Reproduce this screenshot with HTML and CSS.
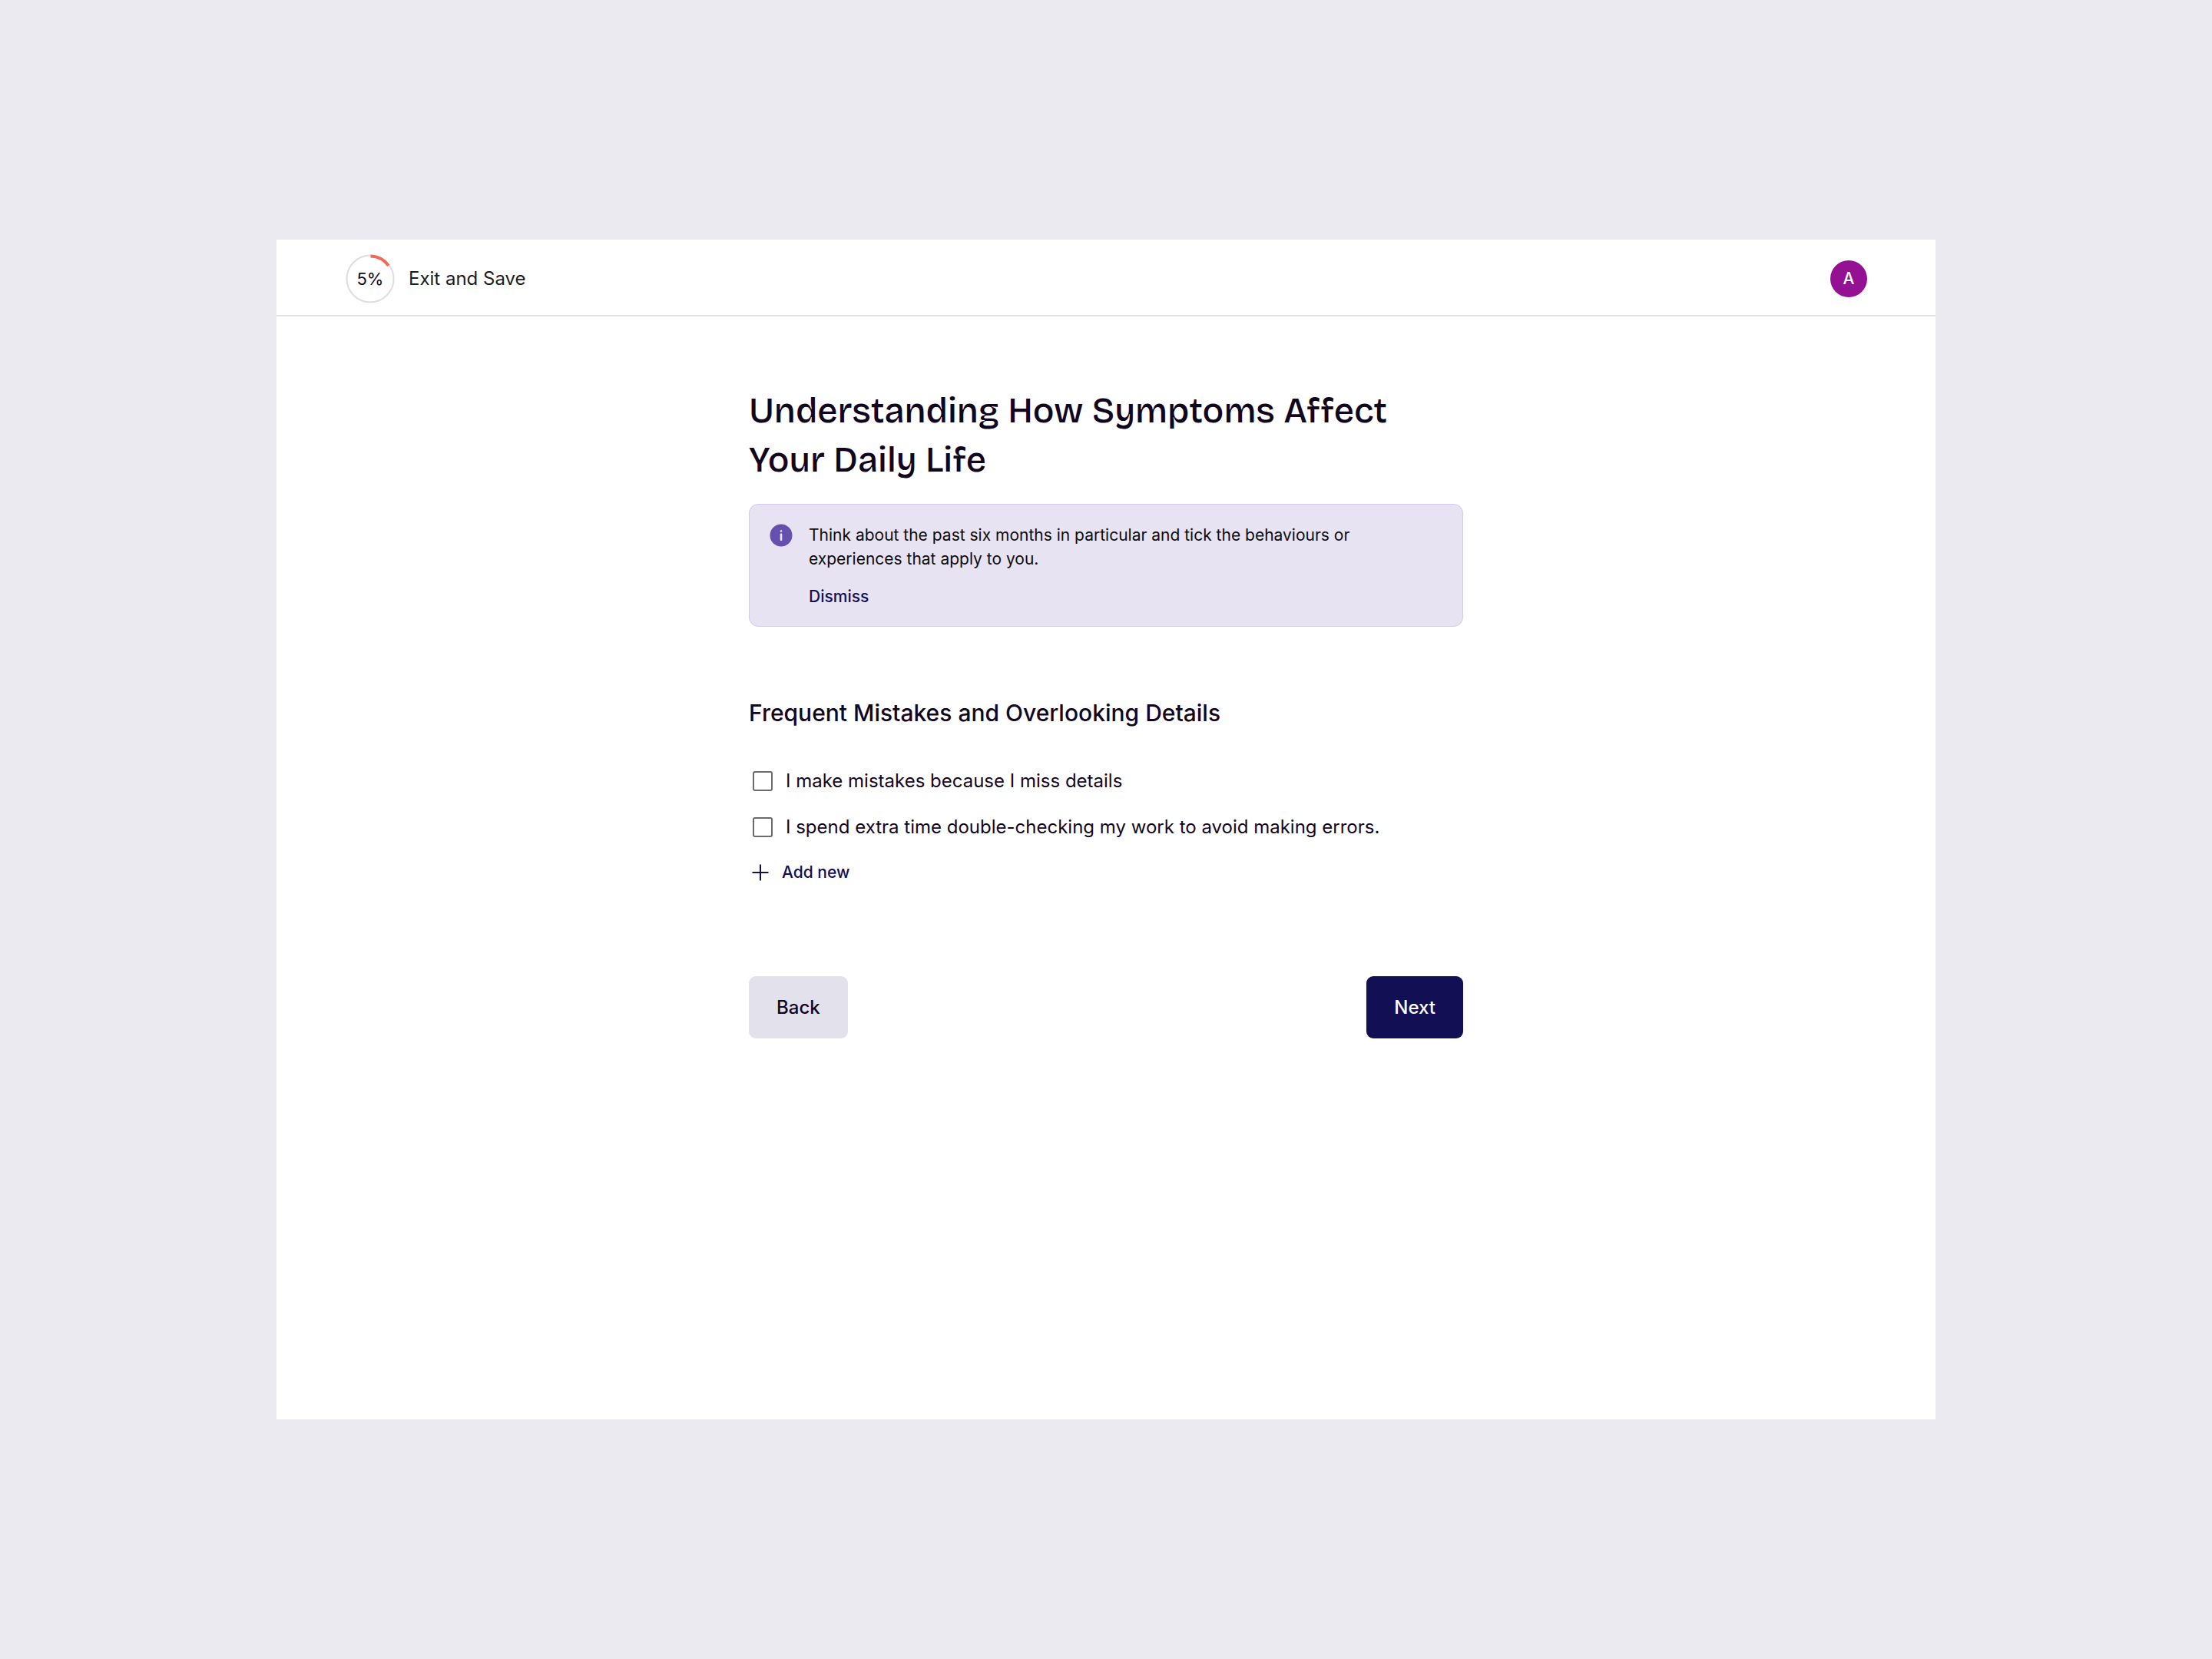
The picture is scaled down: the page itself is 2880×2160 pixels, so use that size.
FILE: index.html
```html
<!DOCTYPE html>
<html lang="en">
<head>
  <meta charset="utf-8">
  <meta name="viewport" content="width=device-width, initial-scale=1">
  <title>Understanding How Symptoms Affect Your Daily Life</title>
  <link rel="stylesheet" href="styles.css">
</head>
<body class="page">
  <div class="panel">
    <header class="header">
      <a class="exit" href="#exit">
        <span class="progress">
          <svg class="progress-ring" viewBox="0 0 64 64" aria-hidden="true">
            <circle cx="32" cy="32" r="30.5" fill="none" stroke="#dedede" stroke-width="2"/>
            <path d="M32.500 2.500 A29.500 29.500 0 0 1 55.800 14.800" fill="none" stroke="#ee6a55" stroke-width="4"/>
          </svg>
          <span class="progress-value">5%</span>
        </span>
        <span>Exit and Save</span>
      </a>
      <button class="avatar" type="button" aria-label="Account">A</button>
    </header>

    <main class="content">
      <h1 class="title">Understanding How Symptoms Affect Your Daily Life</h1>

      <section class="notice">
        <svg class="notice-icon" viewBox="0 0 30 30" aria-hidden="true">
          <circle cx="15" cy="15" r="14.500" fill="#6550ad"/>
          <rect x="13.700" y="8.300" width="2.600" height="2.400" rx="1" fill="#e8e3f3"/>
          <rect x="13.700" y="12.500" width="2.600" height="9.500" rx="1" fill="#e8e3f3"/>
        </svg>
        <div class="notice-body">
          <p class="notice-text">Think about the past six months in particular and tick the behaviours or experiences that apply to you.</p>
          <button class="text-button" type="button">Dismiss</button>
        </div>
      </section>

      <form class="form">
        <fieldset class="question">
          <legend class="question-title">Frequent Mistakes and Overlooking Details</legend>
          <div class="options">
            <label class="option"><input class="checkbox" type="checkbox" name="details">I make mistakes because I miss details</label>
            <label class="option"><input class="checkbox" type="checkbox" name="checking">I spend extra time double-checking my work to avoid making errors.</label>
          </div>
          <button class="text-button add" type="button">
            <svg class="add-icon" viewBox="0 0 22 22" aria-hidden="true">
              <path d="M11 .5v21M.5 11h21" fill="none" stroke="#130f54" stroke-width="2"/>
            </svg>
            Add new
          </button>
        </fieldset>
        <div class="actions">
          <button class="button button-secondary" type="button">Back</button>
          <button class="button button-primary" type="submit">Next</button>
        </div>
      </form>
    </main>
  </div>
</body>
</html>
```
FILE: styles.css
```css
* {
  box-sizing: border-box;
}

.page {
  display: flex;
  min-height: 100vh;
  margin: 0;
  padding: 312px 12.5%;
  background: #ebeaf0;
  color: #12061f;
  font-family: Inter, "Liberation Sans", sans-serif;
  font-size: 24px;
  line-height: 36px;
}

button {
  padding: 0;
  border: 0;
  background: none;
  color: inherit;
  font: inherit;
  cursor: pointer;
}

.panel {
  flex: 1;
  background: #fff;
}

.header {
  display: flex;
  align-items: center;
  justify-content: space-between;
  padding: 19px 89px 15px 90px;
  border-bottom: 2px solid #e0e0e2;
}

.exit {
  display: flex;
  align-items: center;
  gap: 18px;
  color: #1d1b20;
  text-decoration: none;
}

.progress {
  display: grid;
  place-items: center;
}

.progress-ring,
.progress-value {
  grid-area: 1 / 1;
}

.progress-ring {
  width: 64px;
  height: 64px;
}

.progress-value {
  color: #12061f;
  font-size: 22px;
}

.avatar {
  width: 48px;
  height: 48px;
  border-radius: 50%;
  background: #951193;
  color: #fff;
  font-size: 21px;
  font-weight: 500;
}

.content {
  max-width: 930px;
  margin: 0 auto;
  padding: 91px 0;
}

.title {
  margin: 0 0 25px;
  font-family: "Bricolage Grotesque", Inter, "Liberation Sans", sans-serif;
  font-size: 46px;
  font-weight: 550;
  line-height: 64px;
}

.notice {
  display: flex;
  gap: 21px;
  padding: 24px 26px 21px;
  border: 1px solid #d3caea;
  border-radius: 12px;
  background: #e8e3f3;
}

.notice-icon {
  flex: none;
  width: 30px;
  height: 30px;
  margin-top: 1px;
}

.notice-text {
  max-width: 740px;
  margin: 0 0 17px;
  color: #0c0c0e;
  font-size: 21px;
  line-height: 31px;
}

.text-button {
  display: block;
  color: #130f54;
  font-size: 21px;
  font-weight: 500;
  line-height: 34px;
}

.form {
  margin-top: 90px;
}

.question {
  margin: 0;
  padding: 0;
  border: 0;
}

.question-title {
  padding: 0;
  font-size: 30px;
  font-weight: 500;
  line-height: 45px;
}

.options {
  display: grid;
  gap: 24px;
  padding: 48px 0 24px;
}

.option {
  display: flex;
  align-items: center;
  gap: 17px;
  padding-left: 5px;
}

.checkbox {
  flex: none;
  width: 26px;
  height: 26px;
  margin: 0;
  appearance: none;
  border: 2px solid #6b6b6b;
  border-radius: 3px;
}

.checkbox:checked {
  background: #130f54;
  border-color: #130f54;
}

.add {
  display: flex;
  align-items: center;
  gap: 17px;
  padding-left: 4px;
}

.add-icon {
  width: 22px;
  height: 22px;
}

.actions {
  display: flex;
  justify-content: space-between;
  margin-top: 118px;
}

.button {
  padding: 23px 36px 22px;
  border-radius: 9px;
  font-weight: 500;
}

.button-secondary {
  background: #e3e1ec;
}

.button-primary {
  background: #130f54;
  color: #fff;
}
```
